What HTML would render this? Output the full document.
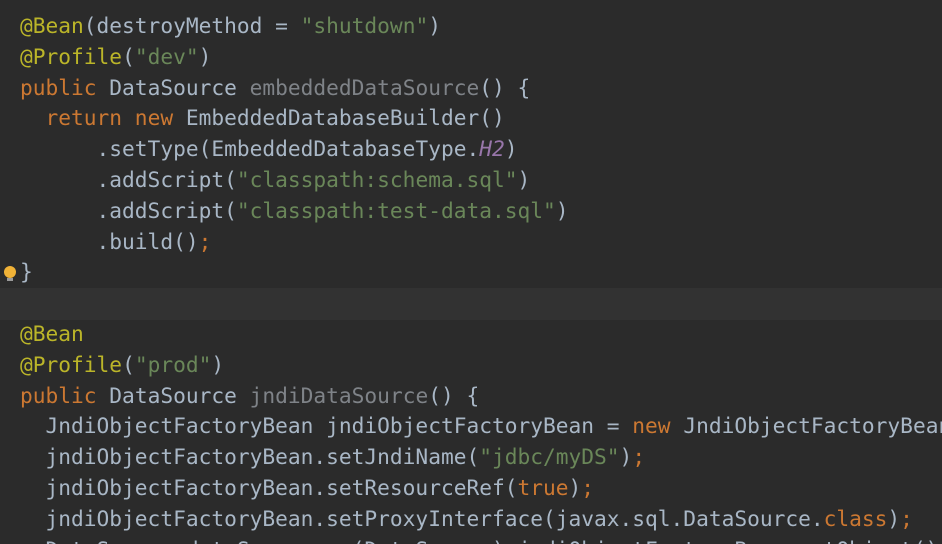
<!DOCTYPE html>
<html><head><style>
html,body{margin:0;width:942px;height:544px;overflow:hidden}
body{background:#2b2b2b;position:relative}
.band{position:absolute;left:0;top:288px;width:942px;height:32px;background:#323232}
pre{position:absolute;left:20px;top:11px;width:922px;height:533px;overflow:hidden;margin:0;font-family:"DejaVu Sans Mono","Liberation Mono",monospace;font-size:21.2px;line-height:30.8px;color:#a9b7c6;white-space:pre}
.a{color:#bbb529}.k{color:#cc7832}.s{color:#6a8759}.g{color:#7f8388}.p{color:#9876aa;font-style:italic}
.bulb{position:absolute;left:4px;top:266px;width:12px;height:12px;border-radius:50%;background:#f0b237}
.bulb:after{content:"";position:absolute;left:3px;top:12px;width:6px;height:3px;background:#9a9a9a}
</style></head><body>
<div class="band"></div>
<div class="bulb"></div>
<pre><span class="a">@Bean</span>(destroyMethod = <span class="s">"shutdown"</span>)
<span class="a">@Profile</span>(<span class="s">"dev"</span>)
<span class="k">public</span> DataSource <span class="g">embeddedDataSource</span>() {
  <span class="k">return new</span> EmbeddedDatabaseBuilder()
      .setType(EmbeddedDatabaseType.<span class="p">H2</span>)
      .addScript(<span class="s">"classpath:schema.sql"</span>)
      .addScript(<span class="s">"classpath:test-data.sql"</span>)
      .build()<span class="k">;</span>
}

<span class="a">@Bean</span>
<span class="a">@Profile</span>(<span class="s">"prod"</span>)
<span class="k">public</span> DataSource <span class="g">jndiDataSource</span>() {
  JndiObjectFactoryBean jndiObjectFactoryBean = <span class="k">new</span> JndiObjectFactoryBean()<span class="k">;</span>
  jndiObjectFactoryBean.setJndiName(<span class="s">"jdbc/myDS"</span>)<span class="k">;</span>
  jndiObjectFactoryBean.setResourceRef(<span class="k">true</span>)<span class="k">;</span>
  jndiObjectFactoryBean.setProxyInterface(javax.sql.DataSource.<span class="k">class</span>)<span class="k">;</span>
  DataSource dataSource = (DataSource) jndiObjectFactoryBean.getObject()<span class="k">;</span>
</pre>
</body></html>
